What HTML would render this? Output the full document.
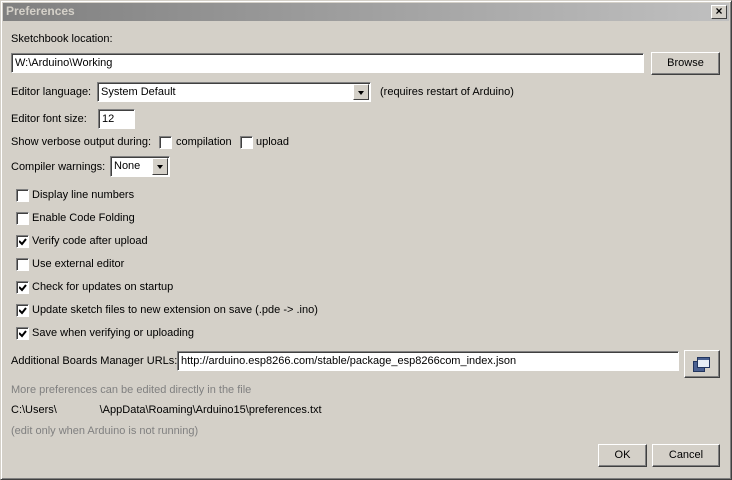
<!DOCTYPE html><html><head><style>
*{box-sizing:border-box;margin:0;padding:0}
body{width:732px;height:480px;background:#d4d0c8;font:11px "Liberation Sans",sans-serif;color:#000;position:relative;overflow:hidden}
.win{position:absolute;left:0;top:0;width:732px;height:480px;border:1px solid;border-color:#d4d0c8 #404040 #404040 #d4d0c8;box-shadow:inset 1px 1px #fff,inset -1px -1px #808080}
.title{position:absolute;left:3px;top:3px;width:726px;height:18px;background:linear-gradient(90deg,#808080,#c0c0c0);color:#d4d0c8;font-weight:bold;font-size:12px;padding:1px 3px}
.x{position:absolute;right:5px;top:5px;width:16px;height:14px;background:#d4d0c8;border:1px solid;border-color:#fff #404040 #404040 #fff;font-size:12px;line-height:11px;text-align:center;font-weight:bold}
.a{position:absolute;white-space:nowrap}
.in{position:absolute;background:#fff;border:1px solid;border-color:#808080 #fff #fff #808080;box-shadow:inset 1px 1px #404040;padding:0 3px;white-space:nowrap;line-height:18px}
.btn{position:absolute;background:#d4d0c8;border:1px solid;border-color:#fff #404040 #404040 #fff;box-shadow:inset -1px -1px #808080;text-align:center}
.cb{position:absolute;left:16px;width:13px;height:13px;background:#fff;border:1px solid;border-color:#808080 #fff #fff #808080;box-shadow:inset 1px 1px #404040}
.cb svg{position:absolute;left:2px;top:2px}
.dd{position:absolute;top:1px;right:1px;width:16px;bottom:1px;background:#d4d0c8;border:1px solid;border-color:#fff #404040 #404040 #fff}
.dd:after{content:"";position:absolute;left:4px;top:6px;border:3px solid transparent;border-top:4px solid #000;border-bottom:0}
.g{color:#808080}
</style></head><body><div class="win"></div>
<div class="title">Preferences</div><div class="x">×</div>
<div class="a" style="left:11px;top:33px">Sketchbook location:</div>
<div class="in" style="left:11px;top:53px;width:633px;height:20px">W:\Arduino\Working</div>
<div class="btn" style="left:651px;top:52px;width:69px;height:23px;line-height:20px">Browse</div>
<div class="a" style="left:11px;top:86px">Editor language:</div>
<div class="in" style="left:97px;top:82px;width:274px;height:20px">System Default<div class="dd"></div></div>
<div class="a" style="left:380px;top:86px">(requires restart of Arduino)</div>
<div class="a" style="left:11px;top:113px">Editor font size:</div>
<div class="in" style="left:98px;top:109px;width:37px;height:20px">12</div>
<div class="a" style="left:11px;top:136px">Show verbose output during:</div>
<div class="cb" style="left:159px;top:136px"></div><div class="a" style="left:176px;top:136px">compilation</div>
<div class="cb" style="left:240px;top:136px"></div><div class="a" style="left:256px;top:136px">upload</div>
<div class="a" style="left:11px;top:161px">Compiler warnings:</div>
<div class="in" style="left:110px;top:156px;width:60px;height:21px;line-height:19px">None<div class="dd"></div></div>
<div class="cb" style="top:189px"></div><div class="a" style="left:32px;top:189px">Display line numbers</div>
<div class="cb" style="top:212px"></div><div class="a" style="left:32px;top:212px">Enable Code Folding</div>
<div class="cb" style="top:235px"><svg width="8" height="8"><path d="M0 3L3 6L7 1" stroke="#000" stroke-width="2" fill="none"/></svg></div><div class="a" style="left:32px;top:235px">Verify code after upload</div>
<div class="cb" style="top:258px"></div><div class="a" style="left:32px;top:258px">Use external editor</div>
<div class="cb" style="top:281px"><svg width="8" height="8"><path d="M0 3L3 6L7 1" stroke="#000" stroke-width="2" fill="none"/></svg></div><div class="a" style="left:32px;top:281px">Check for updates on startup</div>
<div class="cb" style="top:304px"><svg width="8" height="8"><path d="M0 3L3 6L7 1" stroke="#000" stroke-width="2" fill="none"/></svg></div><div class="a" style="left:32px;top:304px">Update sketch files to new extension on save (.pde -&gt; .ino)</div>
<div class="cb" style="top:327px"><svg width="8" height="8"><path d="M0 3L3 6L7 1" stroke="#000" stroke-width="2" fill="none"/></svg></div><div class="a" style="left:32px;top:327px">Save when verifying or uploading</div>
<div class="a" style="left:11px;top:355px">Additional Boards Manager URLs:</div>
<div class="in" style="left:177px;top:351px;width:502px;height:20px">http://arduino.esp8266.com/stable/package_esp8266com_index.json</div>
<div class="btn" style="left:684px;top:350px;width:36px;height:28px"><svg width="20" height="16" style="margin-top:5px" viewBox="0 0 20 16"><rect x="1.5" y="5.5" width="11" height="10" fill="#4a6090" stroke="#22355e"/><rect x="5.5" y="1.5" width="12" height="10" fill="#e8eef5" stroke="#22355e"/><rect x="6" y="2" width="11" height="2" fill="#4a6090"/></svg></div>
<div class="a g" style="left:11px;top:384px">More preferences can be edited directly in the file</div>
<div class="a" style="left:11px;top:404px">C:\Users\&nbsp;&nbsp;&nbsp;&nbsp;&nbsp;&nbsp;&nbsp;&nbsp;&nbsp;&nbsp;&nbsp;&nbsp;&nbsp;&nbsp;\AppData\Roaming\Arduino15\preferences.txt</div>
<div class="a g" style="left:11px;top:425px">(edit only when Arduino is not running)</div>
<div class="btn" style="left:598px;top:444px;width:49px;height:23px;line-height:20px">OK</div>
<div class="btn" style="left:652px;top:444px;width:68px;height:23px;line-height:20px">Cancel</div>
</body></html>
